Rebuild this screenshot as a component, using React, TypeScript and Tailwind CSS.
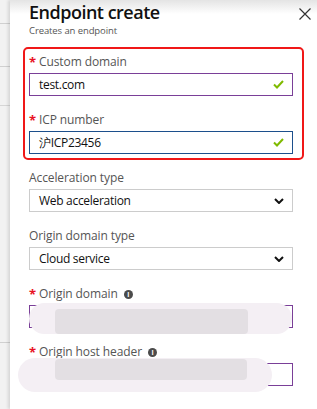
import { ReactNode } from "react";

const font = { fontFamily: '"Open Sans", "Noto Sans", sans-serif' };

function Check() {
  return (
    <svg width="11" height="9" viewBox="0 0 11 9" className="shrink-0">
      <polyline points="1,4.5 4,7.5 10,1" fill="none" stroke="#7fba00" strokeWidth="2" />
    </svg>
  );
}

function Chevron() {
  return (
    <svg width="10" height="6" viewBox="0 0 10 6" className="shrink-0">
      <polyline points="1,1 5,5 9,1" fill="none" stroke="#111" strokeWidth="2" />
    </svg>
  );
}

function Info() {
  return (
    <span className="ml-[6px] inline-flex h-[9px] w-[9px] items-center justify-center rounded-full bg-[#4b4b4b] text-[7px] font-bold leading-none text-white">
      i
    </span>
  );
}

function Label({ required, info, children }: { required?: boolean; info?: boolean; children: ReactNode }) {
  return (
    <div className="flex h-[16px] items-center text-[12px] leading-[16px] tracking-[-0.1px] text-[#555]">
      {required && <span className="mr-[4px] w-[6px] text-[13px] font-bold text-[#e81123]">*</span>}
      <span>{children}</span>
      {info && <Info />}
    </div>
  );
}

function Field({
  label,
  required,
  info,
  value,
  border,
  check,
  select,
}: {
  label: string;
  required?: boolean;
  info?: boolean;
  value?: string;
  border: string;
  check?: boolean;
  select?: boolean;
}) {
  return (
    <div className="flex flex-col">
      <Label required={required} info={info}>{label}</Label>
      <div className={`mt-[3px] flex h-[23px] w-[264px] items-center justify-between border pl-[9px] pr-[8px] text-[12px] tracking-[-0.3px] text-[#111] ${border}`}>
        <span>{value}</span>
        {check && <Check />}
        {select && <Chevron />}
      </div>
    </div>
  );
}

function Smudge({ className, inner }: { className: string; inner: string }) {
  return (
    <div className={`absolute rounded-full bg-[#f4eff4] ${className}`}>
      <div className={`absolute rounded-[4px] bg-[#e3dfe3] ${inner}`} />
    </div>
  );
}

export default function App() {
  return (
    <div className="flex h-[409px] w-[317px] overflow-hidden bg-white" style={font}>
      <div className="flex w-[10px] shrink-0 flex-col bg-[#f2f2f2]">
        <div className="mt-[23px] h-px bg-[#d0d0d0]" />
        <div className="mt-[42px] h-px bg-[#d0d0d0]" />
        <div className="mt-[38px] h-px bg-[#d6d6d6]" />
        <div className="mt-[236px] h-px bg-[#d0d0d0]" />
      </div>
      <div className="relative flex-1 bg-[linear-gradient(to_bottom,#e4e4e4,#ffffff_14px)] shadow-[-2px_0_3px_rgba(0,0,0,0.12)]">
        <button className="absolute right-[6px] top-[8px]">
          <svg width="12" height="12" viewBox="0 0 12 12">
            <path d="M0.5 0.5 L11.5 11.5 M11.5 0.5 L0.5 11.5" stroke="#333" strokeWidth="1.2" />
          </svg>
        </button>
        <div className="pl-[19px]">
          <h1 className="text-[18px] font-semibold leading-[24px] tracking-[-0.5px] text-[#111]">Endpoint create</h1>
          <p className="text-[9.5px] leading-[13px] tracking-[-0.1px] text-[#555]">Creates an endpoint</p>
        </div>
        <div className="relative pt-[10px]">
          <div className="ml-[13px] w-[281px] rounded-[5px] border-2 border-[#f01818] pb-[4px] pl-[4px] pt-[5px]">
            <Field required label="Custom domain" value="test.com" border="border-[#7a3f98]" check />
            <div className="mt-[16px]">
              <Field required label="ICP number" value="沪ICP23456" border="border-[#1c4f8c]" check />
            </div>
          </div>
          <div className="ml-[19px] flex flex-col gap-[16px] pt-[10px]">
            <Field label="Acceleration type" value="Web acceleration" border="border-[#cccccc]" select />
            <Field label="Origin domain type" value="Cloud service" border="border-[#cccccc]" select />
            <Field required info label="Origin domain" border="border-[#7a3f98]" />
            <Field required info label="Origin host header" border="border-[#7a3f98]" />
          </div>
          <Smudge className="left-[19px] top-[266px] h-[31px] w-[263px]" inner="left-[26px] right-[44px] top-[6px] bottom-0" />
          <Smudge className="left-[8px] top-[321px] h-[34px] w-[254px]" inner="left-[37px] right-[25px] top-[1px] bottom-[12px]" />
        </div>
      </div>
    </div>
  );
}
